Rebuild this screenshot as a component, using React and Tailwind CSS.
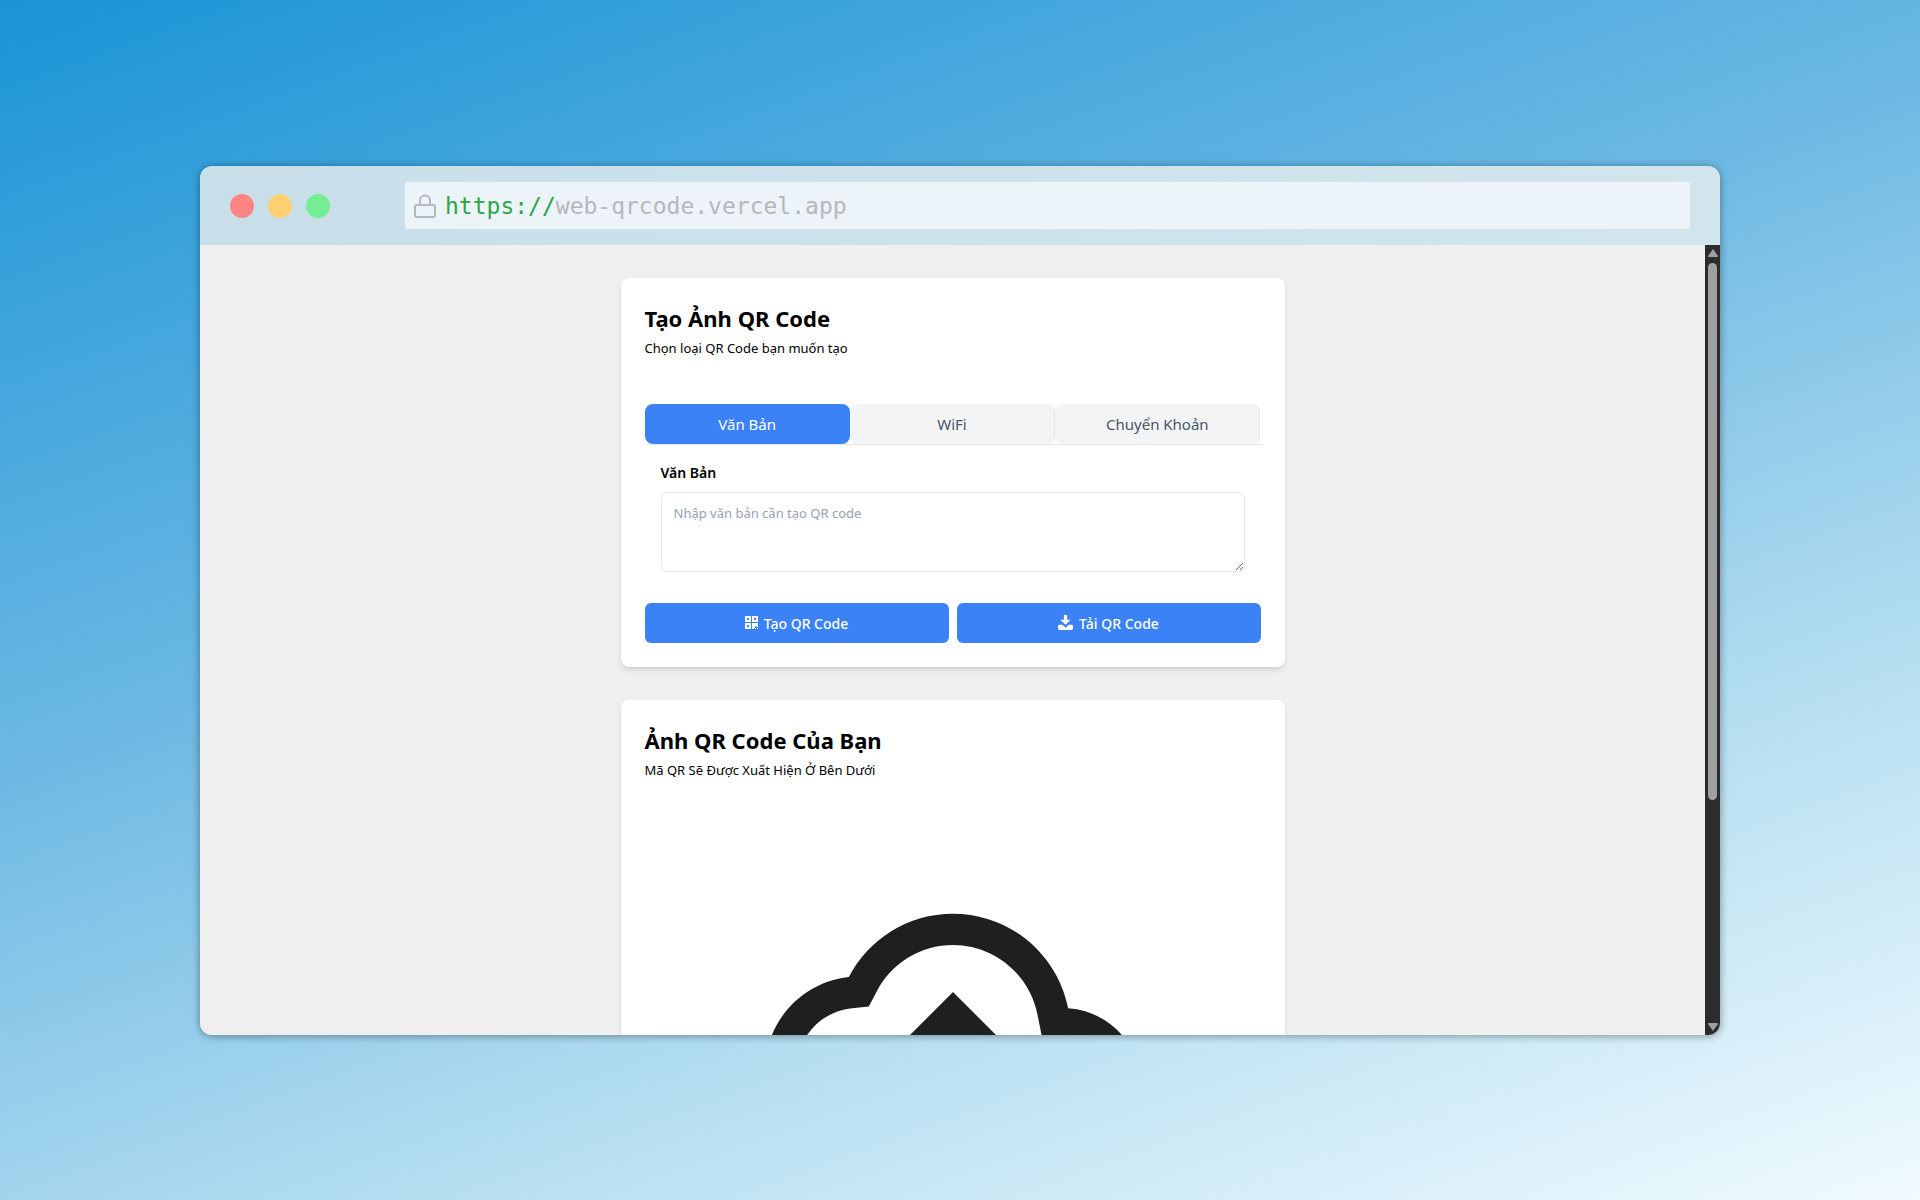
import React from "react";

const tabs = ["Văn Bản", "WiFi", "Chuyển Khoản"];

function QrIcon() {
  return (
    <svg viewBox="0 0 13 13" className="mb-1 size-[13px]" fill="currentColor" fillRule="evenodd" aria-hidden="true">
      <path d="M0 0h6v6H0zM2 2v2h2V2zM7 0h6v6H7zM9 2v2h2V2zM0 7h6v6H0zM2 9v2h2V9zM7 7h6v4h-2v-1h-1v2H9v1H7zM10 12h1v1h-1zM12 12h1v1h-1z" />
    </svg>
  );
}

function DownloadIcon() {
  return (
    <svg viewBox="0 0 16 16" className="mb-1 size-[15px]" fill="currentColor" aria-hidden="true">
      <path d="M6.300 0h3.400v5h3.800L8 10.500 2.500 5h3.800z" />
      <path d="M0 12q0-1.500 1.500-1.500h3L8 13.500l3.500-3h3q1.500 0 1.500 1.500v2.500q0 1.500-1.500 1.500h-13Q0 16 0 14.500z" />
    </svg>
  );
}

function CloudUpload() {
  return (
    <svg viewBox="0 0 24 24" className="mx-auto block w-94 max-w-full" fill="#1f1f1f" role="img" aria-label="QR">
      <path d="M19.35 10.04C18.67 6.59 15.64 4 12 4 9.11 4 6.6 5.64 5.35 8.04 2.34 8.36 0 10.91 0 14c0 3.31 2.69 6 6 6h13c2.76 0 5-2.24 5-5 0-2.64-2.05-4.78-4.65-4.96zM19 18H6c-2.21 0-4-1.79-4-4 0-2.05 1.53-3.76 3.56-3.97l1.07-.11.5-.95C8.08 7.14 9.94 6 12 6c2.62 0 4.88 1.86 5.39 4.43l.3 1.5 1.53.11c1.56.1 2.78 1.41 2.78 2.96 0 1.65-1.35 3-3 3zM8 13h2.55v3h2.9v-3H16l-4-4z" />
    </svg>
  );
}

function Card({ title, subtitle, children }) {
  return (
    <section className="w-full rounded-lg bg-white p-6 shadow-md">
      <h2 className="text-[22px] leading-8 font-bold text-black">{title}</h2>
      <p className="text-[13px] leading-7 text-black">{subtitle}</p>
      {children}
    </section>
  );
}

export default function App() {
  return (
    <div className="flex h-screen flex-col justify-center bg-[linear-gradient(160deg,#1a94d6_0%,#6fbae4_42%,#b3ddf0_70%,#f0fbff_100%)] px-50 pt-px font-['Noto_Sans',sans-serif]">
      <main className="flex h-[869px] flex-col overflow-hidden rounded-xl shadow-[0_1px_8px_rgba(0,0,0,0.4)]">
        <header className="flex h-[79px] shrink-0 items-center bg-linear-to-r from-[#c8dfea] to-[#d2e5ec] px-[30px]">
          <div className="flex gap-3.5">
            <span className="size-6 rounded-full bg-[#ff8585]" />
            <span className="size-6 rounded-full bg-[#ffd071]" />
            <span className="size-6 rounded-full bg-[#74ed94]" />
          </div>
          <div className="ml-[75px] flex h-[47px] flex-1 items-center gap-2 rounded-xs bg-[#edf4f9] pl-2">
            <svg viewBox="0 0 24 24" className="size-6" fill="none" stroke="#b4b8ba" strokeWidth="2" aria-hidden="true">
              <rect x="2" y="11" width="20" height="12" rx="2" />
              <path d="M7 11V6.500a5 5 0 0 1 10 0V11" />
            </svg>
            <span className="font-['DejaVu_Sans_Mono',monospace] text-[23px] leading-8 text-[#b4b8ba]">
              <span className="text-[#28a745]">https://</span>web-qrcode.vercel.app
            </span>
          </div>
        </header>
        <div className="flex min-h-0 flex-1 bg-[#efefef]">
          <div className="flex min-w-0 flex-1 justify-center overflow-hidden pt-[33px]">
            <div className="flex w-166 flex-col gap-[33px]">
              <Card title="Tạo Ảnh QR Code" subtitle="Chọn loại QR Code bạn muốn tạo">
                <div className="mt-[42px] grid grid-cols-3 border-b border-gray-200" role="tablist">
                  {tabs.map((tab, i) => (
                    <button
                      key={tab}
                      role="tab"
                      aria-selected={i === 0}
                      className={
                        i === 0
                          ? "h-10 rounded-lg bg-[#3b82f6] text-[15px] text-white"
                          : "h-10 rounded-lg border-r border-gray-200 bg-gray-100 text-[15px] text-gray-600"
                      }
                    >
                      {tab}
                    </button>
                  ))}
                </div>
                <div className="px-4 pt-4">
                  <label htmlFor="qr-text" className="block text-sm leading-6 font-semibold text-black">Văn Bản</label>
                  <textarea
                    id="qr-text"
                    placeholder="Nhập văn bản cần tạo QR code"
                    className="mt-[7px] block h-20 w-full rounded-md border border-gray-200 bg-white px-3 py-2 text-[13px] leading-6 placeholder:text-gray-400"
                  />
                </div>
                <div className="mt-[31px] grid grid-cols-2 gap-2">
                  <button className="flex h-10 items-center justify-center gap-1.5 rounded-md bg-[#3b82f6] pt-0.5 text-sm font-medium text-white">
                    <QrIcon />Tạo QR Code
                  </button>
                  <button className="flex h-10 items-center justify-center gap-1.5 rounded-md bg-[#3b82f6] pt-0.5 text-sm font-medium text-white">
                    <DownloadIcon />Tải QR Code
                  </button>
                </div>
              </Card>
              <Card title="Ảnh QR Code Của Bạn" subtitle="Mã QR Sẽ Được Xuất Hiện Ở Bên Dưới">
                <div className="mt-[67px]">
                  <CloudUpload />
                </div>
              </Card>
            </div>
          </div>
          <div className="flex w-[15px] flex-col items-center bg-[#2c2c2c] py-1">
            <svg viewBox="0 0 10 8" className="h-2 w-2.5" fill="#9f9f9f" aria-hidden="true"><path d="M5 0l5 7q0 1-1 1H1q-1 0-1-1z" /></svg>
            <div className="mt-1.5 h-[537px] w-[9px] rounded-full bg-[#9f9f9f]" />
            <svg viewBox="0 0 10 8" className="mt-auto h-2 w-2.5" fill="#9f9f9f" aria-hidden="true"><path d="M5 8l5-7q0-1-1-1H1Q0 0 0 1z" /></svg>
          </div>
        </div>
      </main>
    </div>
  );
}
